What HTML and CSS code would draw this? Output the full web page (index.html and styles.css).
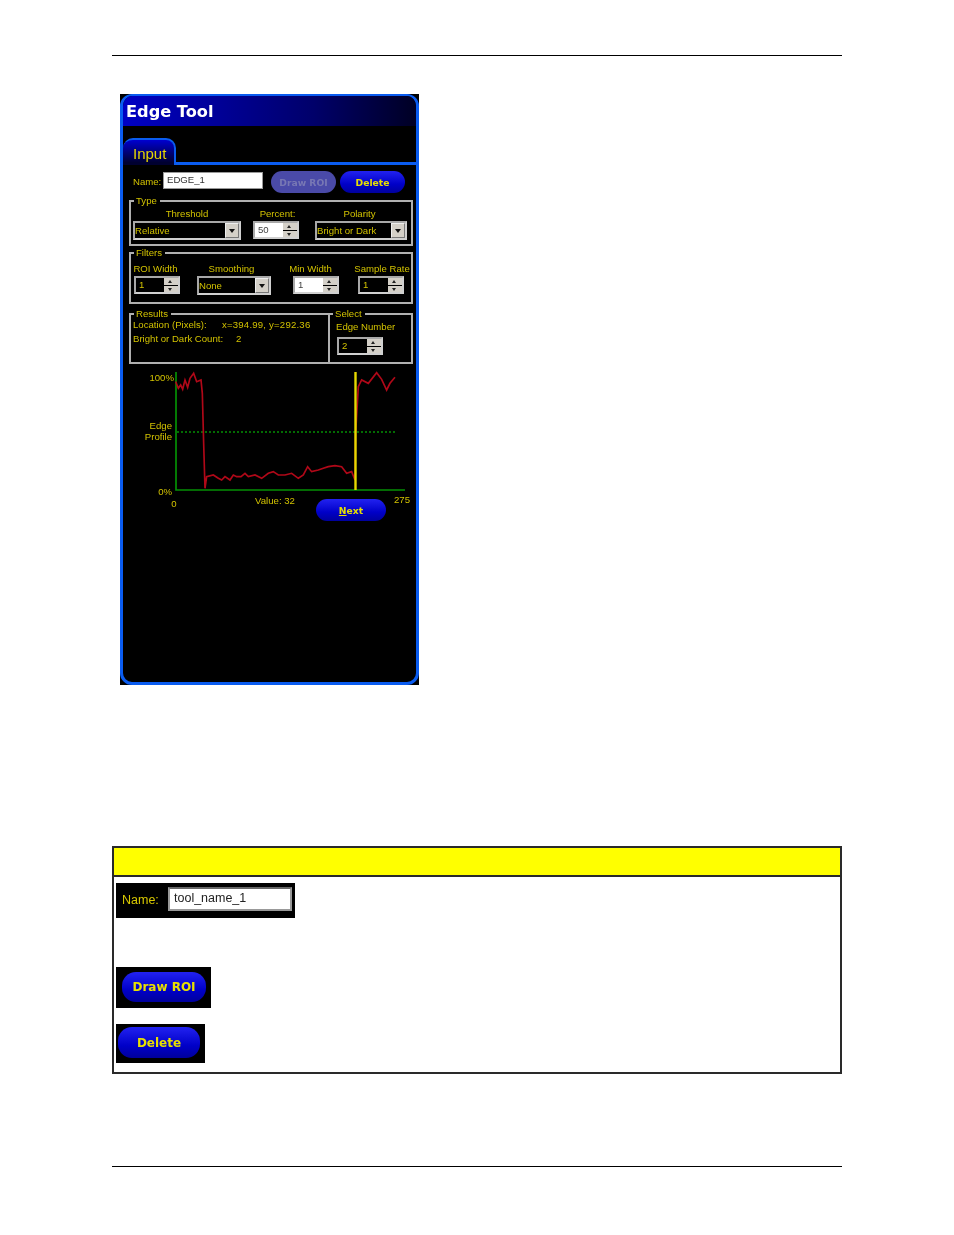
FILE: index.html
```html
<!DOCTYPE html>
<html lang="en">
<head>
    <meta charset="UTF-8">
    <title>Edge Tool</title>
    <link rel="stylesheet" href="styles.css">
</head>
<body>
    <div class="page">
        <hr class="rule rule_top">

        <div class="tool">
            <div class="tool_frame">
                <div class="tool_title">Edge Tool</div>
                <div class="tabs"><div class="tab_item">Input</div></div>
                <div class="tool_body">
                    <div class="name_row">
                        <span class="name_label">Name:</span>
                        <div class="name_input">EDGE_1</div>
                        <div class="btn btn_disabled">Draw ROI</div>
                        <div class="btn btn_delete">Delete</div>
                    </div>

                    <div class="group group_type">
                        <span class="group_title">Type</span>
                        <div class="field col_threshold">
                            <span class="field_label">Threshold</span>
                            <div class="combo"><span class="combo_text">Relative</span><span class="combo_btn"></span></div>
                        </div>
                        <div class="field col_percent">
                            <span class="field_label">Percent:</span>
                            <div class="spin spin_light"><span class="spin_text">50</span><span class="spin_btns"><i class="up"></i><i class="down"></i></span></div>
                        </div>
                        <div class="field col_polarity">
                            <span class="field_label">Polarity</span>
                            <div class="combo"><span class="combo_text">Bright or Dark</span><span class="combo_btn"></span></div>
                        </div>
                    </div>

                    <div class="group group_filters">
                        <span class="group_title">Filters</span>
                        <div class="field col_roi">
                            <span class="field_label">ROI Width</span>
                            <div class="spin"><span class="spin_text">1</span><span class="spin_btns"><i class="up"></i><i class="down"></i></span></div>
                        </div>
                        <div class="field col_smooth">
                            <span class="field_label">Smoothing</span>
                            <div class="combo"><span class="combo_text">None</span><span class="combo_btn"></span></div>
                        </div>
                        <div class="field col_min">
                            <span class="field_label">Min Width</span>
                            <div class="spin spin_light"><span class="spin_text">1</span><span class="spin_btns"><i class="up"></i><i class="down"></i></span></div>
                        </div>
                        <div class="field col_sample">
                            <span class="field_label">Sample Rate</span>
                            <div class="spin"><span class="spin_text">1</span><span class="spin_btns"><i class="up"></i><i class="down"></i></span></div>
                        </div>
                    </div>

                    <div class="results_row">
                        <div class="group group_results">
                            <span class="group_title">Results</span>
                            <div class="result_line"><span class="result_location">Location (Pixels):</span><span class="result_xy">x=394.99, y=292.36</span></div>
                            <div class="result_line"><span class="result_count">Bright or Dark Count:</span><span>2</span></div>
                        </div>
                        <div class="group group_select">
                            <span class="group_title">Select</span>
                            <div class="select_label">Edge Number</div>
                            <div class="spin"><span class="spin_text">2</span><span class="spin_btns"><i class="up"></i><i class="down"></i></span></div>
                        </div>
                    </div>

                    <svg class="chart" width="290" height="160" viewBox="0 0 290 160">
                        <g class="chart_text">
                            <text x="49" y="13" text-anchor="end">100%</text>
                            <text x="47" y="61" text-anchor="end">Edge</text>
                            <text x="47" y="72" text-anchor="end">Profile</text>
                            <text x="47" y="127" text-anchor="end">0%</text>
                            <text x="49" y="139" text-anchor="middle">0</text>
                            <text x="150" y="136" text-anchor="middle">Value: 32</text>
                            <text x="277" y="135" text-anchor="middle">275</text>
                        </g>
                        <path d="M51 4V122H280" fill="none" stroke="#049004" stroke-width="1.700"/>
                        <path d="M52 64H270" stroke="#049004" stroke-width="1.400" stroke-dasharray="2 2"/>
                        <g transform="translate(-10 -68) scale(.3333)">
                            <polyline fill="none" stroke="#b00818" stroke-width="5" points="182,245 190,265 197,255 203,268 210,240 218,262 225,235 236,220 245,245 258,240 262,280 266,430 270,565 275,530 295,525 310,535 320,540 330,530 345,540 355,525 365,530 378,530 390,520 400,530 420,525 440,535 460,520 475,515 490,525 510,525 530,520 550,535 565,525 578,500 590,515 610,510 625,505 640,500 660,497 680,500 695,520 710,515 720,540 722,400 730,260 740,240 760,250 785,218 800,238 815,270 825,250 840,232"/>
                        </g>
                        <path d="M230.500 4V122" stroke="#e6d800" stroke-width="2.400"/>
                    </svg>
                    <div class="next_row"><div class="btn btn_next"><u>N</u>ext</div></div>
                </div>
            </div>
        </div>

        <div class="table">
            <div class="table_head"></div>
            <div class="table_body">
                <div class="shot shot_name">
                    <span class="shot_label">Name:</span>
                    <div class="shot_input">tool_name_1</div>
                </div>
                <div class="shot shot_draw"><div class="btn btn_large btn_draw_large">Draw ROI</div></div>
                <div class="shot shot_delete"><div class="btn btn_large btn_delete_large">Delete</div></div>
            </div>
        </div>

        <hr class="rule rule_bottom">
    </div>
</body>
</html>
```

FILE: styles.css
```css
* {
    box-sizing: border-box;
}
body {
    margin: 0;
    background: #fff;
    font-family: "Liberation Sans", Arial, sans-serif;
}
.page {
    width: 730px;
    margin-left: 112px;
    height: 1235px;
    overflow: hidden;
}
.rule {
    margin: 0;
    border: 0;
    border-top: 1px solid #000;
}
.rule_top {
    margin-top: 55px;
}
.rule_bottom {
    margin-top: 92px;
}

/* tool window */
.tool {
    width: 299px;
    height: 591px;
    margin: 38px 0 0 8px;
    background: #000;
    filter: blur(.5px);
    font-size: 9.600px;
    color: #d2c200;
}
.tool_frame {
    height: 100%;
    border: solid #0a5cf0;
    border-width: 2px 3px 3px;
    border-radius: 12px;
    overflow: hidden;
}
.tool_title {
    height: 30px;
    padding-left: 3px;
    background: linear-gradient(90deg, #0000c4, #00006a 65%, #000024);
    color: #fff;
    font-family: "DejaVu Sans", sans-serif;
    font-weight: bold;
    font-size: 16.200px;
    line-height: 32px;
}
.tabs {
    height: 39px;
    display: flex;
    align-items: flex-end;
    border-bottom: 3px solid #0a5cf0;
}
.tab_item {
    width: 53px;
    height: 27px;
    margin-bottom: -3px;
    padding-left: 10px;
    border: solid #0a5cf0;
    border-width: 2px 2px 0 0;
    border-radius: 10px 10px 0 0;
    background: linear-gradient(#0000d0, #000030 90%);
    font-size: 15px;
    line-height: 28px;
    color: #e6d600;
}
.tool_body {
    padding: 6px 3px 0 6px;
}

/* name row */
.name_row {
    height: 22px;
    display: flex;
    align-items: center;
}
.name_label {
    width: 34px;
    padding: 0 0 2px 4px;
}
.name_input {
    align-self: flex-start;
    width: 100px;
    height: 17px;
    margin-top: 1px;
    padding-left: 3px;
    border: 1px solid #999;
    background: #fff;
    color: #333;
    line-height: 14px;
}
.btn {
    border-radius: 12px;
    display: flex;
    align-items: center;
    justify-content: center;
    font-family: "DejaVu Sans", sans-serif;
    font-weight: bold;
    color: #e8e000;
    background: linear-gradient(#2222f0, #0000c8 60%, #00009c);
}
.name_row .btn {
    width: 65px;
    height: 22px;
    font-size: 9.200px;
}
.btn_disabled {
    margin-left: 8px;
    background: #4a4aa8 !important;
    color: #7878b4 !important;
}
.btn_delete {
    margin-left: 4px;
}

/* group boxes */
.group {
    position: relative;
    border: 2px solid #b0b0b0;
}
.group_title {
    position: absolute;
    top: -7px;
    left: 3px;
    padding: 0 3px 0 2px;
    background: #000;
    line-height: 12px;
}
.group_type {
    height: 46px;
    margin-top: 7px;
    padding: 5px 0 0 2px;
    display: flex;
}
.group_filters {
    height: 52px;
    margin-top: 6px;
    padding: 8px 0 0 3px;
    display: flex;
}
.field {
    display: flex;
    flex-direction: column;
    align-items: center;
}
.field_label {
    height: 13px;
    margin-bottom: 1px;
    line-height: 13px;
    white-space: nowrap;
}
.col_threshold {
    width: 108px;
}
.col_percent {
    width: 46px;
    margin-left: 12px;
}
.col_percent .field_label {
    margin-left: 3px;
}
.col_polarity {
    width: 92px;
    margin-left: 16px;
}
.col_polarity .field_label {
    margin-right: 3px;
}
.col_roi {
    width: 46px;
}
.col_roi .field_label {
    margin-right: 3px;
}
.col_smooth {
    width: 74px;
    margin-left: 17px;
}
.col_smooth .field_label {
    margin-right: 5px;
}
.col_min {
    width: 46px;
    margin-left: 22px;
}
.col_min .field_label {
    margin-right: 11px;
}
.col_sample {
    width: 46px;
    margin-left: 19px;
}
.col_sample .field_label {
    margin-left: 2px;
}

/* combo + spin */
.combo {
    width: 100%;
    height: 19px;
    display: flex;
    border: 2px solid #a8a8a8;
    border-right-color: #d0d0d0;
    border-bottom-color: #d0d0d0;
    background: #000;
}
.combo_text {
    flex: 1;
    line-height: 15px;
    white-space: nowrap;
}
.combo_btn {
    width: 14px;
    position: relative;
    background: #d4d0c8;
    border: 1px solid #eee;
    border-right-color: #777;
    border-bottom-color: #777;
}
.combo_btn::after {
    content: "";
    position: absolute;
    left: 3px;
    top: 5px;
    border: 3.500px solid transparent;
    border-top: 4px solid #111;
    border-bottom: 0;
}
.spin {
    width: 46px;
    height: 18px;
    display: flex;
    border: 2px solid #a8a8a8;
    border-right-color: #d0d0d0;
    border-bottom-color: #d0d0d0;
    background: #000;
}
.spin_light {
    background: #fff;
    color: #444;
}
.spin_text {
    flex: 1;
    padding-left: 3px;
    line-height: 14px;
}
.spin_btns {
    width: 14px;
    display: flex;
    flex-direction: column;
    gap: 1px;
    background: #000;
}
.spin_btns i {
    flex: 1;
    position: relative;
    background: #d4d0c8;
}
.spin_btns i::after {
    content: "";
    position: absolute;
    left: 4px;
    top: 2px;
    border: 2.500px solid transparent;
}
.spin_btns .up::after {
    border-top: 0;
    border-bottom: 3px solid #222;
}
.spin_btns .down::after {
    border-bottom: 0;
    border-top: 3px solid #222;
}

/* results */
.results_row {
    height: 51px;
    margin-top: 9px;
    display: flex;
}
.group_results {
    width: 201px;
    padding: 3px 0 0 2px;
}
.group_select {
    width: 85px;
    margin-left: -2px;
    padding: 5px 0 0 6px;
}
.result_line {
    height: 14px;
    line-height: 14px;
    display: flex;
    white-space: nowrap;
}
.result_location {
    width: 89px;
}
.result_xy {
    letter-spacing: .2px;
}
.result_count {
    width: 103px;
}
.select_label {
    height: 17px;
    line-height: 13px;
}
.group_select .spin {
    margin-left: 1px;
}

/* chart */
.chart {
    display: block;
    margin: 4px 0 0 -4px;
}
.chart_text {
    font-size: 9.600px;
    fill: #d2c200;
}
.next_row {
    position: relative;
    height: 0;
}
.btn_next {
    position: absolute;
    left: 187px;
    top: -29px;
    width: 70px;
    height: 22px;
    font-size: 9.200px;
}

/* description table */
.table {
    height: 228px;
    margin-top: 161px;
    border: 2px solid #2a2a2a;
}
.table_head {
    height: 29px;
    background: #ffff00;
    border-bottom: 2px solid #2a2a2a;
}
.table_body {
    padding: 6px 0 0 2px;
}
.shot {
    background: #000;
    filter: blur(.4px);
}
.shot_name {
    width: 179px;
    height: 35px;
    padding: 4px 0 0 6px;
    display: flex;
    color: #d8c800;
    font-size: 12.500px;
    line-height: 26px;
}
.shot_label {
    width: 46px;
}
.shot_input {
    width: 124px;
    height: 24px;
    padding-left: 4px;
    border: 2px solid #999;
    border-top-color: #666;
    background: #fff;
    color: #222;
    font-size: 12.500px;
    line-height: 19px;
}
.shot_draw {
    width: 95px;
    height: 41px;
    margin-top: 49px;
    padding: 5px 0 0 6px;
}
.shot_delete {
    width: 89px;
    height: 39px;
    margin-top: 16px;
    padding: 3px 0 0 2px;
}
.btn_large {
    font-size: 12px;
    border-radius: 14px;
}
.btn_draw_large {
    width: 84px;
    height: 30px;
}
.btn_delete_large {
    width: 82px;
    height: 31px;
}
```
